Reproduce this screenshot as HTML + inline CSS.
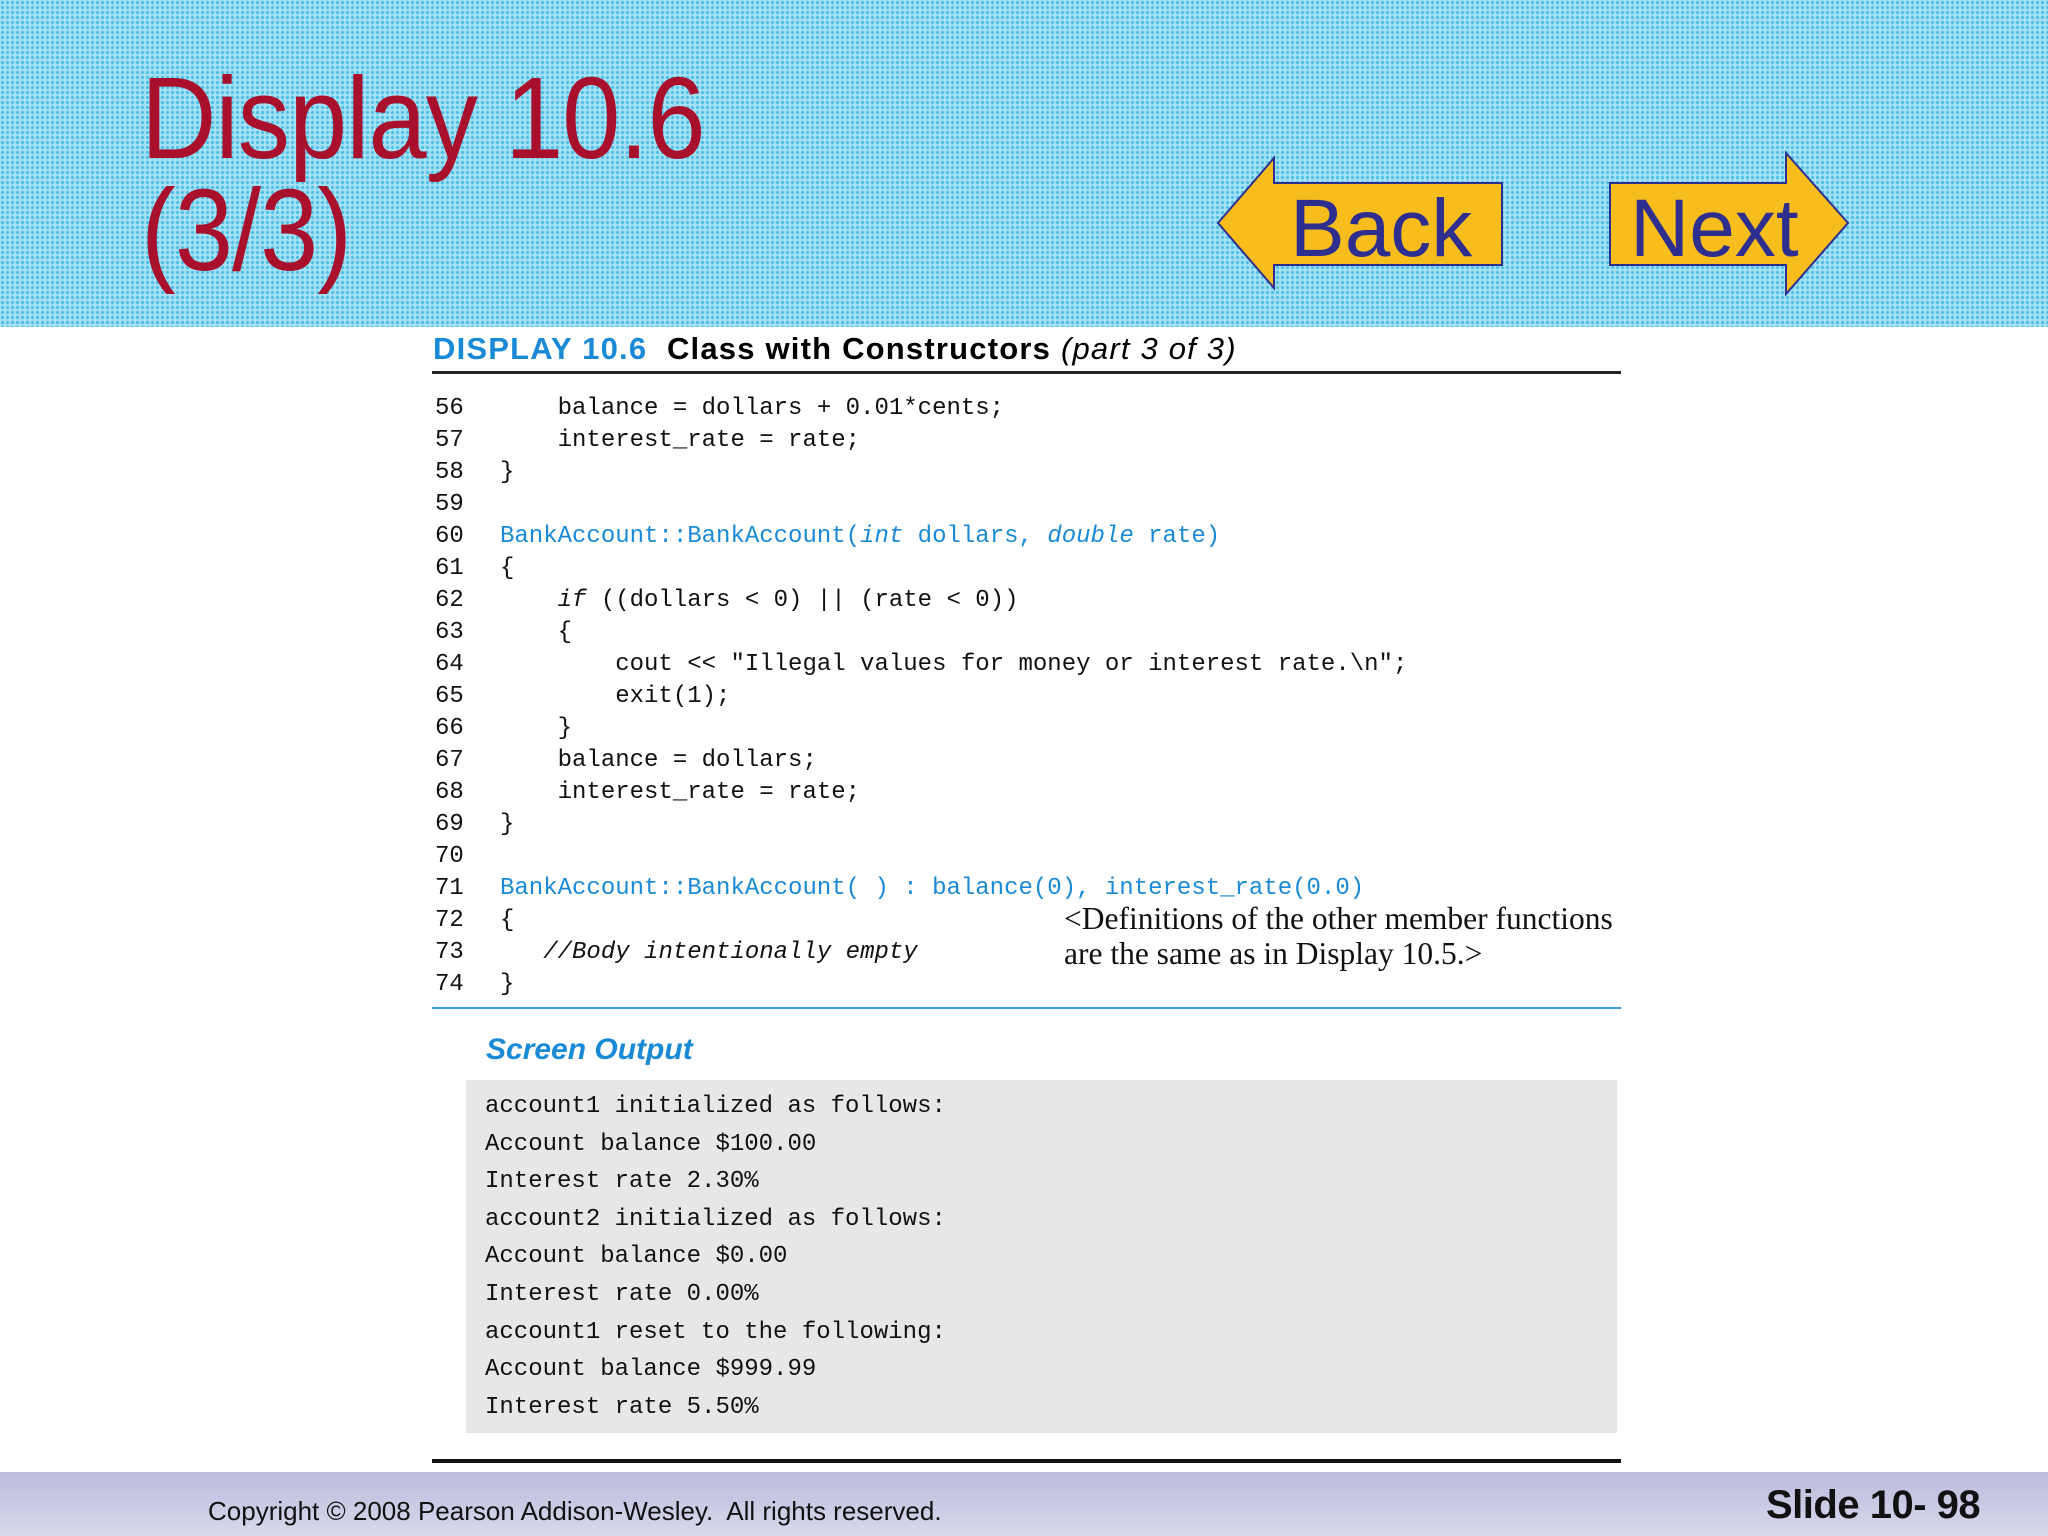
<!DOCTYPE html>
<html><head><meta charset="utf-8"><style>
*{margin:0;padding:0}
body{width:2048px;height:1536px;position:relative;overflow:hidden;background:#fff;font-family:"Liberation Sans",sans-serif}
.hdr{position:absolute;left:0;top:0;width:2048px;height:327px;background-color:#a6e0f3;
background-image:radial-gradient(circle,#4fc0e8 1.4px,transparent 1.9px);background-size:5px 5px}
.t{position:absolute;left:141px;color:#a8102c;font-size:116px;line-height:1;letter-spacing:-1px;transform:scaleX(0.9);transform-origin:left top;white-space:nowrap}
.c{position:absolute;font-family:"Liberation Mono",monospace;font-size:24px;line-height:32px;white-space:pre;color:#111}
.b{color:#1a8ad6}
.o{position:absolute;left:485px;font-family:"Liberation Mono",monospace;font-size:24px;white-space:pre;color:#111}
</style></head><body>
<div class="hdr"></div>
<div class="t" style="top:60px">Display 10.6</div>
<div class="t" style="top:172px">(3/3)</div>
<svg style="position:absolute;left:0;top:0" width="2048" height="330">
<polygon points="1274,158 1274,183 1502,183 1502,265 1274,265 1274,288 1218,223" fill="#f7bd1c" stroke="#2e2e8f" stroke-width="2"/>
<polygon points="1610,183 1786,183 1786,153 1848,223 1786,294 1786,265 1610,265" fill="#f7bd1c" stroke="#2e2e8f" stroke-width="2"/>
<text x="1290" y="256" font-family="Liberation Sans" font-size="82" fill="#2e2e8f">Back</text>
<text x="1630" y="256" font-family="Liberation Sans" font-size="82" fill="#2e2e8f">Next</text>
</svg>
<div style="position:absolute;left:433px;top:331px;font-size:31px;letter-spacing:1.2px;font-weight:bold;white-space:nowrap"><span style="color:#1a8ad6">DISPLAY 10.6</span>&nbsp;&nbsp;<span>Class with Constructors</span> <i style="font-weight:normal">(part 3 of 3)</i></div>
<div style="position:absolute;left:432px;top:371px;width:1189px;height:3px;background:#222"></div>
<div class="c" style="left:435px;top:393px">56
57
58
59
60
61
62
63
64
65
66
67
68
69
70
71
72
73
74</div>
<div class="c" style="left:500px;top:393px">    balance = dollars + 0.01*cents;
    interest_rate = rate;
}

<span class="b">BankAccount::BankAccount(<i>int</i> dollars, <i>double</i> rate)</span>
{
    <i>if</i> ((dollars &lt; 0) || (rate &lt; 0))
    {
        cout &lt;&lt; "Illegal values for money or interest rate.\n";
        exit(1);
    }
    balance = dollars;
    interest_rate = rate;
}

<span class="b">BankAccount::BankAccount( ) : balance(0), interest_rate(0.0)</span>
{
   <i>//Body intentionally empty</i>
}</div>
<div style="position:absolute;left:1064px;top:901px;font-family:'Liberation Serif',serif;font-size:31.5px;line-height:35px;color:#111;white-space:nowrap">&lt;Definitions of the other member functions<br>are the same as in Display 10.5.&gt;</div>
<div style="position:absolute;left:432px;top:1007px;width:1189px;height:2px;background:#3a9ae0"></div>
<div style="position:absolute;left:486px;top:1033px;font-size:30px;font-weight:bold;font-style:italic;color:#1a8ad6">Screen Output</div>
<div style="position:absolute;left:466px;top:1080px;width:1151px;height:353px;background:#e8e6e9"></div>
<div class="o" style="top:1088px;line-height:37.6px">account1 initialized as follows:
Account balance $100.00
Interest rate 2.30%
account2 initialized as follows:
Account balance $0.00
Interest rate 0.00%
account1 reset to the following:
Account balance $999.99
Interest rate 5.50%</div>
<div style="position:absolute;left:432px;top:1459px;width:1189px;height:4px;background:#111"></div>
<div style="position:absolute;left:0;top:1472px;width:2048px;height:64px;background:linear-gradient(#bbbbdd,#d8d8ec)"></div>
<div style="position:absolute;left:208px;top:1496px;font-size:26px;color:#111">Copyright © 2008 Pearson Addison-Wesley.&nbsp; All rights reserved.</div>
<div style="position:absolute;left:1766px;top:1483px;font-size:40px;font-weight:bold;color:#111;letter-spacing:-0.5px">Slide 10- 98</div>
</body></html>
